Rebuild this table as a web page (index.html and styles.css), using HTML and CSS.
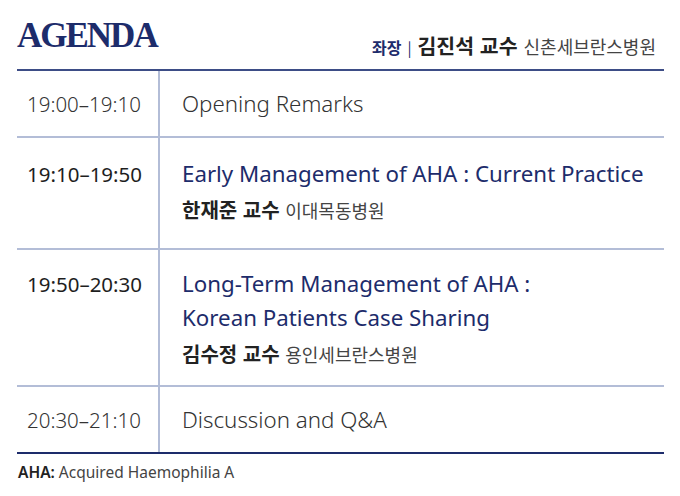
FILE: index.html
```html
<!DOCTYPE html>
<html lang="ko">
<head>
<meta charset="utf-8">
<link rel="stylesheet" href="styles.css">
</head>
<body>
<div class="page">
  <header class="head">
    <h1 class="title">AGENDA</h1>
    <div class="chair">
      <span class="chair-label">좌장</span>
      <span class="chair-sep">|</span>
      <span class="chair-name">김진석 교수</span>
      <span class="chair-org">신촌세브란스병원</span>
    </div>
  </header>
  <div class="agenda">
    <div class="row row-simple row-first">
      <div class="time light">19:00–19:10</div>
      <div class="content"><div class="topic light">Opening Remarks</div></div>
    </div>
    <div class="row row-talk">
      <div class="time">19:10–19:50</div>
      <div class="content">
        <div class="topic navy">Early Management of AHA : Current Practice</div>
        <div class="speaker"><b>한재준 교수</b> <span class="org">이대목동병원</span></div>
      </div>
    </div>
    <div class="row row-talk2">
      <div class="time">19:50–20:30</div>
      <div class="content">
        <div class="topic navy">Long-Term Management of AHA :<br>Korean Patients Case Sharing</div>
        <div class="speaker"><b>김수정 교수</b> <span class="org">용인세브란스병원</span></div>
      </div>
    </div>
    <div class="row row-simple row-last">
      <div class="time light">20:30–21:10</div>
      <div class="content"><div class="topic light">Discussion and Q&amp;A</div></div>
    </div>
  </div>
  <p class="note"><b>AHA:</b> Acquired Haemophilia A</p>
</div>
</body>
</html>
```

FILE: styles.css
```css
html, body { margin: 0; padding: 0; background: #fff; }
body {
  font-family: "Noto Sans", "Noto Sans CJK KR", sans-serif;
  color: #222;
}
.page { width: 647px; padding: 0 0 0 17px; }
.head {
  display: flex;
  justify-content: space-between;
  align-items: flex-end;
  height: 69px;
  border-bottom: 2px solid #3d4d86;
}
.title {
  margin: 0 0 15px 0;
  font-family: "Liberation Serif", serif;
  font-weight: bold;
  font-size: 35px;
  line-height: 36px;
  letter-spacing: -2px;
  color: #1d2c6b;
}
.chair {
  margin: 0 8px 8px 0;
  display: flex;
  align-items: baseline;
  gap: 6px;
  font-family: "Noto Sans CJK KR", sans-serif;
  line-height: 26px;
}
.chair-label { font-size: 16px; font-weight: bold; color: #1d2c6b; }
.chair-sep { font-size: 15px; color: #1d2c6b; }
.chair-name { font-size: 20.5px; font-weight: bold; color: #222; }
.chair-org { font-size: 18px; color: #444; }
.agenda { display: flex; flex-direction: column; }
.row {
  display: grid;
  grid-template-columns: 143px 1fr;
  border-bottom: 2px solid #b3bdd7;
}
.row-last { border-bottom: 2px solid #1d2c6b; }
.time {
  font-size: 20.5px;
  color: #1e1e1e;
  padding-left: 10px;
  border-right: 2px solid #b3bdd7;
  line-height: 34px;
}
.content { padding-left: 22px; }
.topic { font-size: 22.3px; line-height: 34px; }
.light { font-weight: 300; color: #333; }
.navy { color: #1d2c6b; }
.row-simple .time, .row-simple .content { padding-top: 16px; padding-bottom: 15px; }
.row-talk .time, .row-talk .content { padding-top: 19px; padding-bottom: 21px; }
.row-talk2 .time, .row-talk2 .content { padding-top: 17px; padding-bottom: 14px; }
.speaker {
  margin-top: 2px;
  line-height: 34px;
  font-family: "Noto Sans CJK KR", sans-serif;
  font-size: 20px;
  color: #222;
}
.speaker b { font-weight: bold; }
.speaker .org { font-size: 18px; color: #444; }
.note {
  margin: 7px 0 0 1px;
  font-size: 15.5px;
  line-height: 22px;
  color: #444;
}
.note b { font-weight: 600; color: #222; }
```
